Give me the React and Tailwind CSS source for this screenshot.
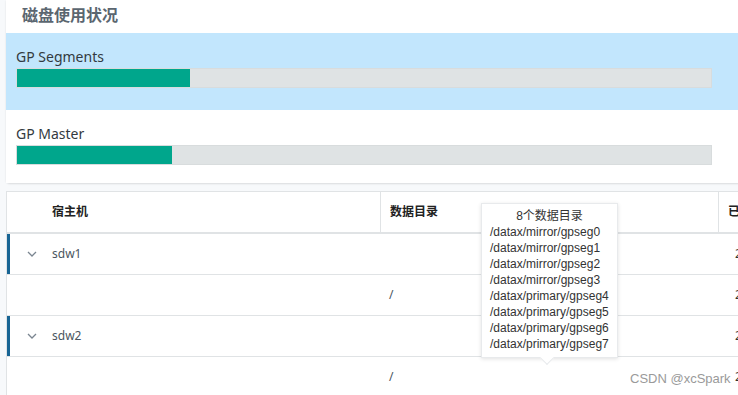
import React from 'react';

const dirs = [
  '/datax/mirror/gpseg0',
  '/datax/mirror/gpseg1',
  '/datax/mirror/gpseg2',
  '/datax/mirror/gpseg3',
  '/datax/primary/gpseg4',
  '/datax/primary/gpseg5',
  '/datax/primary/gpseg6',
  '/datax/primary/gpseg7',
];

const UsageBar = ({ label, used, active }) => (
  <div className={`pl-[10px] pr-[26px] pt-[13px] ${active ? 'h-[77px] bg-[#c2e6fd]' : 'h-[73px] bg-white'}`}>
    <div className="text-[14px] leading-[22px] text-[#333a40]">{label}</div>
    <div className="h-[20px] w-[696px] bg-[#dfe3e4] border border-[#d8dcdd]">
      <div className="h-full bg-[#00a68c]" style={{ width: `${used}px` }} />
    </div>
  </div>
);

const Chevron = () => (
  <svg width="10" height="6" viewBox="0 0 10 6" fill="none" stroke="#7a8590" strokeWidth="1.3">
    <path d="M1 1l4 4 4-4" />
  </svg>
);

const HostRow = ({ name }) => (
  <div className="flex h-[41px] items-center border-b border-[#e0e3e5] relative">
    <div className="absolute left-0 top-0 bottom-0 w-[3px] bg-[#186594]" />
    <div className="w-[45px] flex justify-center pl-[4px]"><Chevron /></div>
    <div className="w-[329px] text-[12px] text-[#4a5560]">{name}</div>
    <div className="w-[338px]" />
    <div className="pl-[16px] text-[12px] text-[#333]">2</div>
  </div>
);

const DirRow = () => (
  <div className="flex h-[41px] items-center border-b border-[#e0e3e5]">
    <div className="w-[374px]" />
    <div className="w-[338px] pl-[8px] text-[12px] text-[#4a5560]">/</div>
    <div className="pl-[16px] text-[12px] text-[#333]">2</div>
  </div>
);

export default function App() {
  return (
    <div className="w-[738px] h-[395px] overflow-hidden bg-[#f7f9fb] pl-[6px] relative" style={{ fontFamily: '"Noto Sans", "Noto Sans CJK SC", sans-serif' }}>
      <div className="w-[760px] bg-white rounded-b-[4px] shadow-[0_1px_2px_rgba(0,0,0,0.12)]">
        <div className="h-[33px] pl-[16px] pt-[3px] text-[16px] font-bold text-[#5b6670] leading-[24px]">磁盘使用状况</div>
        <UsageBar label="GP Segments" used={173} active />
        <UsageBar label="GP Master" used={155} />
      </div>

      <div className="mt-[8px] w-[760px] bg-white border border-[#e0e3e5]">
        <div className="flex h-[42px] items-center border-b-2 border-[#e0e3e5] text-[12px] font-bold text-[#222]">
          <div className="w-[45px]" />
          <div className="w-[328px] h-full flex items-center">宿主机</div>
          <div className="w-[338px] h-full flex items-center border-l border-[#e0e3e5] pl-[9px]">数据目录</div>
          <div className="h-full flex items-center border-l border-[#e0e3e5] pl-[9px]">已</div>
        </div>
        <HostRow name="sdw1" />
        <DirRow />
        <HostRow name="sdw2" />
        <DirRow />
      </div>

      <div className="absolute left-[481px] top-[203px] w-[137px] bg-white border border-[#e8eaec] shadow-[0_1px_4px_rgba(0,0,0,0.12)] px-[8px] pt-[4px] pb-[5px] text-[12px] leading-[16px] text-[#333]" style={{ fontFamily: '"Liberation Sans", "Noto Sans CJK SC", sans-serif' }}>
        <div className="text-center">8个数据目录</div>
        {dirs.map(d => (
          <div key={d}>{d}</div>
        ))}
        <div className="absolute left-[60px] bottom-[-6px] w-[10px] h-[10px] bg-white rotate-45 border-r border-b border-[#e8eaec]" />
      </div>

      <div className="absolute left-[630px] top-[369px] text-[13px] text-[#9a9a9a]" style={{ fontFamily: '"Liberation Sans", sans-serif' }}>CSDN @xcSpark</div>
    </div>
  );
}
